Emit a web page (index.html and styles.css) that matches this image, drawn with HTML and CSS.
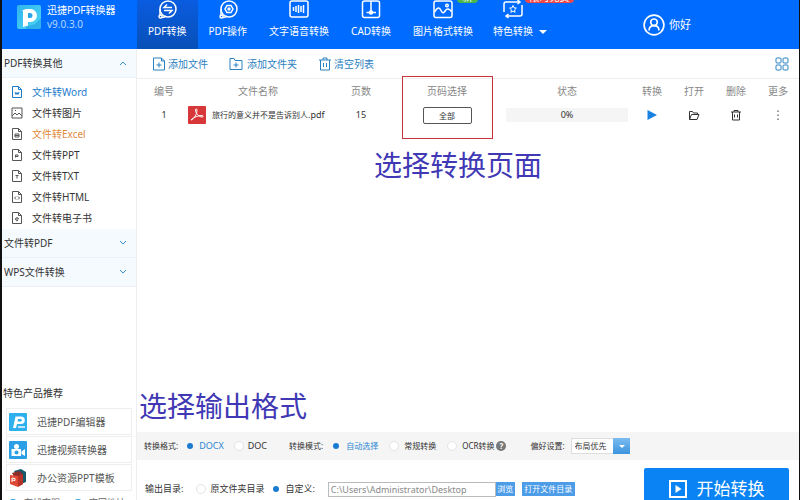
FILE: index.html
```
<!DOCTYPE html>
<html lang="zh-CN">

<head>
    <meta charset="UTF-8">
    <meta name="viewport" content="width=device-width, initial-scale=1.0">
    <title>迅捷PDF转换器</title>
    <link rel="stylesheet" href="styles.css">
</head>

<body>
    <div class="window">
        <header class="header">
            <div class="brand">
                <svg class="logo" viewBox="0 0 24 24">
                    <defs>
                        <linearGradient id="logoBg" x1="0" y1="0" x2="1" y2="1">
                            <stop offset="0" stop-color="#2fb4f0" />
                            <stop offset="1" stop-color="#4fd8f0" />
                        </linearGradient>
                    </defs>
                    <rect width="24" height="24" rx="2" fill="url(#logoBg)" />
                    <path d="M9 22 18 19 24 13V24H9z" fill="#1d9be6" opacity=".6" />
                    <path d="M5 5.500 9 4h4.500a5.500 5.500 0 0 1 0 13H11v3.500L6 22V6z" fill="#fff" />
                    <path d="M11 8h2a2.500 2.500 0 0 1 0 5h-2z" fill="#2aa6e8" />
                </svg>
                <div class="brand-text">
                    <div>迅捷PDF转换器</div>
                    <div class="version">v9.0.3.0</div>
                </div>
            </div>
            <nav class="tabs">
                <a href="#" class="tab active">
                    <svg viewBox="0 0 20 20"><circle cx="11" cy="9" r="8" /><path d="M3 9v7" /><circle cx="3.500" cy="16.500" r="1.500" /><path d="M5 17.500c2 0 3-.5 4-1.500" /><path d="M15 7.500H7l3-3M7 10.500h8l-3 3" /></svg>
                    <span>PDF转换</span>
                </a>
                <a href="#" class="tab">
                    <svg viewBox="0 0 20 20"><circle cx="11" cy="9" r="8" /><path d="M3 9v7" /><circle cx="3.500" cy="16.500" r="1.500" /><path d="M5 17.500c2 0 3-.5 4-1.500" /><path d="M9 5.500h4l2 3.500-2 3.500H9L7 9z" /><circle cx="11" cy="9" r="1" /></svg>
                    <span>PDF操作</span>
                </a>
                <a href="#" class="tab">
                    <svg viewBox="0 0 20 20"><rect x="1" y="1" width="18" height="16" rx="2" /><path d="M4.500 7v4M7 6v6M9.500 5v8M12 6v6M14.500 5v8" /></svg>
                    <span>文字语音转换</span>
                </a>
                <a href="#" class="tab">
                    <svg viewBox="0 0 20 20"><rect x="1.500" y="1" width="17" height="16.500" rx="2" /><path d="M10 1v11M5.500 12.500H15" /><circle cx="10" cy="12.500" r="1.500" fill="#fff" /></svg>
                    <span>CAD转换</span>
                </a>
                <a href="#" class="tab">
                    <svg viewBox="0 0 20 20"><rect x="1" y="1" width="18" height="16.500" rx="2" /><path d="M1.500 12c3-5 5-5 6.500-1.500s3 2.500 4.500 0 4-2 6 1" /><circle cx="14" cy="5.500" r="1.300" /></svg>
                    <span>图片格式转换</span>
                    <i class="badge badge-new">新</i>
                </a>
                <a href="#" class="tab tab-more">
                    <svg viewBox="0 0 20 20"><path d="M1 12V4a2 2 0 0 1 2-2h13M14.500 0l2.500 2-2.500 2M19 5v9a2 2 0 0 1-2 2H4M5.500 14 3 16l2.500 2" /><path d="m10 5.500 1 2.300 2.400.3-1.800 1.700.5 2.500-2.100-1.200-2.100 1.200.5-2.500-1.800-1.700 2.400-.3z" stroke-width="1" /></svg>
                    <span>特色转换</span>
                    <i class="badge badge-hot">限时免费</i>
                    <i class="caret"></i>
                </a>
            </nav>
            <a href="#" class="user">
                <svg viewBox="0 0 20 20"><circle cx="10" cy="10" r="9" /><circle cx="10" cy="7.500" r="3" /><path d="M5.500 15c0-2.500 1.500-4.500 4.500-4.500s4.500 2 4.500 4.500" /></svg>
                <span>你好</span>
            </a>
        </header>

        <div class="content">
            <aside class="sidebar">
                <button class="group">PDF转换其他<svg viewBox="0 0 8 8"><path d="M1 6l3-3 3 3" /></svg></button>
                <ul class="menu">
                    <li><a href="#" class="current"><svg viewBox="0 0 12 12"><path d="M1.500.5h6l3 3v8h-9zM7.500.5v3h3" /><path d="M4 6l1 2.500 1-2 1 2L8 6" /></svg>文件转Word</a></li>
                    <li><a href="#"><svg viewBox="0 0 12 12"><path d="M1 1h10v10H1zM1 9l3-3 2 2 2-2 3 3M4 3.500h1" /></svg>文件转图片</a></li>
                    <li><a href="#" class="hover"><svg viewBox="0 0 12 12"><path d="M1.500.5h6l3 3v8h-9zM7.500.5v3h3" /><path d="M4 6h4v3H4zM4 7.500h4" /></svg>文件转Excel</a></li>
                    <li><a href="#"><svg viewBox="0 0 12 12"><path d="M1.500.5h6l3 3v8h-9zM7.500.5v3h3" /><path d="M4.500 8.500V6H7v1.500H4.500" /></svg>文件转PPT</a></li>
                    <li><a href="#"><svg viewBox="0 0 12 12"><path d="M1.500.5h6l3 3v8h-9zM7.500.5v3h3" /><path d="M4.500 5.500h3M6 5.500v3" /></svg>文件转TXT</a></li>
                    <li><a href="#"><svg viewBox="0 0 12 12"><path d="M1.500.5h6l3 3v8h-9zM7.500.5v3h3" /><path d="M5 5.500 3.500 7 5 8.500M7 5.500 8.500 7 7 8.500" /></svg>文件转HTML</a></li>
                    <li><a href="#"><svg viewBox="0 0 12 12"><path d="M1.500.5h6l3 3v8h-9zM7.500.5v3h3" /><path d="M4.500 7h3a1.500 1.500 0 1 0-.5 1.300" /></svg>文件转电子书</a></li>
                </ul>
                <button class="group">文件转PDF<svg viewBox="0 0 8 8"><path d="M1 2l3 3 3-3" /></svg></button>
                <button class="group">WPS文件转换<svg viewBox="0 0 8 8"><path d="M1 2l3 3 3-3" /></svg></button>

                <div class="products">
                    <h2>特色产品推荐</h2>
                    <a href="#" class="product">
                        <svg viewBox="0 0 18 18"><rect width="18" height="18" rx="1" fill="#2fb0ee" /><path d="M4 15 6.500 3.500H12a3.500 3.500 0 0 1 0 7.500H8l-1 4z" fill="#fff" /><path d="M9 6h2.500a1.200 1.200 0 0 1 0 2.500h-3z" fill="#2fb0ee" /><path d="M9 14h7" stroke="#bfe8fc" stroke-width="2" /></svg>
                        迅捷PDF编辑器
                    </a>
                    <a href="#" class="product">
                        <svg viewBox="0 0 18 18"><rect width="18" height="18" rx="1" fill="#2b9fe6" /><circle cx="7.500" cy="5.500" r="2.500" fill="#fff" /><path d="M2.500 8h9.500v7H2.500zM12.500 10.500 16 8v7l-3.500-2z" fill="#fff" /><circle cx="7.500" cy="11.500" r="2" fill="#2b9fe6" /></svg>
                        迅捷视频转换器
                    </a>
                    <a href="#" class="product">
                        <svg viewBox="0 0 18 18"><path d="M5 2 12 0l5 3v10l-5 2z" fill="#17596b" /><path d="M3 4l7-2 4 3v10l-4 2z" fill="#8c2e2a" /><path d="M1 6l8 1v11l-8-3z" fill="#e04a35" /><path d="M9 7l5-2v10l-5 3z" fill="#b93228" /><path d="M3 9v4M3 9l3 .5v2l-3-.5" fill="none" stroke="#fff" /></svg>
                        办公资源PPT模板
                    </a>
                    <div class="links">
                        <a href="#"><i></i>在线客服</a>
                        <a href="#"><i></i>官网地址</a>
                    </div>
                </div>
            </aside>

            <main class="main">
                <div class="toolbar">
                    <button><svg viewBox="0 0 14 14"><path d="M1.500 1h8l3 3v9h-11zM9.500 1v3h3M7 5.500v5M4.500 8h5" /></svg>添加文件</button>
                    <button class="add-folder"><svg viewBox="0 0 14 14"><path d="M1 1.500h4l1 2h7v9H1zM7 5.500v5M4.500 8h5" /></svg>添加文件夹</button>
                    <button><svg viewBox="0 0 14 14"><path d="M1 3h12M5 3V1h4v2M2.500 3v10h9V3M5.500 6v4M8.500 6v4" /></svg>清空列表</button>
                    <button class="grid-view" aria-label="视图"><svg viewBox="0 0 14 14"><rect x="1" y="1" width="5" height="5" rx="1" /><rect x="8" y="1" width="5" height="5" rx="1" /><rect x="1" y="8" width="5" height="5" rx="1" /><rect x="8" y="8" width="5" height="5" rx="1" /></svg></button>
                </div>

                <div class="list">
                    <table>
                        <colgroup>
                            <col class="col-no">
                            <col class="col-name">
                            <col class="col-count">
                            <col class="col-pages">
                            <col>
                            <col class="col-action">
                            <col class="col-action">
                            <col class="col-action">
                            <col class="col-action">
                        </colgroup>
                        <thead>
                            <tr>
                                <th>编号</th>
                                <th>文件名称</th>
                                <th>页数</th>
                                <th>页码选择</th>
                                <th>状态</th>
                                <th>转换</th>
                                <th>打开</th>
                                <th>删除</th>
                                <th>更多</th>
                            </tr>
                        </thead>
                        <tbody>
                            <tr>
                                <td>1</td>
                                <td>
                                    <div class="file">
                                        <svg viewBox="0 0 18 18"><rect width="18" height="18" rx="1" fill="#d8373a" /><path d="M3 14c3-1 6-6 6-10 0-1.500-1.500-1.500-1.500 0 0 3 3.500 7 6.500 7 1.500 0 1.500-1.500 0-1.500-4 0-8 1.500-11 4.500z" fill="none" stroke="#fff" /></svg>
                                        <span>旅行的意义并不是告诉别人<span class="ext">.pdf</span></span>
                                    </div>
                                </td>
                                <td>15</td>
                                <td><button class="pages">全部</button></td>
                                <td><div class="progress">0%</div></td>
                                <td><button class="icon play" aria-label="转换"><svg viewBox="0 0 12 12"><path d="M1.500 1v10l9.500-5z" /></svg></button></td>
                                <td><button class="icon" aria-label="打开"><svg viewBox="0 0 12 12"><path d="M1.500 10.500v-8h3l1 1.500h4v1.500M1.500 10.500l2-5H11l-2 5z" /></svg></button></td>
                                <td><button class="icon" aria-label="删除"><svg viewBox="0 0 12 12"><path d="M1 3h10M4 3V1.500h4V3M2.500 3v8h7V3M4.500 5.500v3M7.500 5.500v3" /></svg></button></td>
                                <td><button class="icon" aria-label="更多"><svg viewBox="0 0 12 12"><path d="M6 1.500v1.500M6 5.500v1.500M6 9.500V11" /></svg></button></td>
                            </tr>
                        </tbody>
                    </table>
                    <div class="frame"></div>
                    <p class="note note-pages">选择转换页面</p>
                    <p class="note note-format">选择输出格式</p>
                </div>

                <div class="format">
                    <fieldset class="format-type">
                        <span>转换格式:</span>
                        <label class="latin"><input type="radio" name="format" checked>DOCX</label>
                        <label class="latin"><input type="radio" name="format">DOC</label>
                    </fieldset>
                    <fieldset class="format-mode">
                        <span>转换模式:</span>
                        <label><input type="radio" name="mode" checked>自动选择</label>
                        <label><input type="radio" name="mode">常规转换</label>
                        <label><input type="radio" name="mode">OCR转换<b class="help">?</b></label>
                    </fieldset>
                    <label for="prefer">偏好设置:</label>
                    <div class="select">
                        <select id="prefer">
                            <option>布局优先</option>
                        </select>
                    </div>
                </div>

                <div class="output">
                    <fieldset>
                        <span>输出目录:</span>
                        <label class="origin"><input type="radio" name="dir">原文件夹目录</label>
                        <label><input type="radio" name="dir" checked>自定义:</label>
                    </fieldset>
                    <input class="path" type="text" aria-label="输出目录" value="C:\Users\Administrator\Desktop">
                    <button class="small">浏览</button>
                    <button class="small open-dir">打开文件目录</button>
                    <button class="start"><svg viewBox="0 0 18 18"><rect x="1" y="1" width="16" height="16" /><path d="M6.500 5v8l6-4z" fill="#fff" stroke="none" /></svg>开始转换</button>
                </div>
            </main>
        </div>
    </div>
</body>

</html>
```
FILE: styles.css
```
* {
    box-sizing: border-box;
}

body {
    margin: 0;
    height: 100vh;
    overflow: hidden;
    font-family: "Noto Sans", "Noto Sans CJK SC", sans-serif;
    font-size: 10px;
    line-height: 14px;
    color: #333;
    background-color: #fff;
}

a {
    color: inherit;
    text-decoration: none;
}

button,
input,
select {
    margin: 0;
    padding: 0;
    border: none;
    background: none;
    font: inherit;
    color: inherit;
}

svg {
    flex: none;
    fill: none;
    stroke: currentColor;
}

.logo,
.product svg,
.file svg {
    stroke: none;
}

/* the window runs a little past the bottom of the screen */
.window {
    display: flex;
    flex-direction: column;
    height: calc(100vh + 10px);
    border-left: 2px solid #111;
    border-right: 1px solid #111;
}

/* header */
.header {
    display: flex;
    flex: none;
    height: 49px;
    color: #fff;
    background-color: #006cff;
}

.brand {
    display: flex;
    gap: 6px;
    width: 135px;
    padding: 3px 0 0 15px;
}

.logo {
    width: 24px;
    height: 24px;
    margin-top: 2px;
}

.version {
    color: #b5d5ff;
}

.tabs {
    display: flex;
}

.tab {
    position: relative;
    display: flex;
    flex-direction: column;
    align-items: center;
    gap: 4px;
    padding: 0 11px;
    white-space: nowrap;
}

.tab.active {
    background: linear-gradient(#0a5ce0, #0850b8);
}

.tab-more {
    padding-left: 9px;
    padding-right: 14px;
}

.tab svg {
    width: 20px;
    height: 20px;
    stroke-width: 1.5;
}

.badge {
    position: absolute;
    top: -12px;
    height: 15px;
    border-radius: 4px;
    font-style: normal;
    text-align: center;
    line-height: 18px;
}

.badge-new {
    right: 6px;
    width: 21px;
    background-color: #4cb848;
}

.badge-hot {
    left: 41px;
    width: 49px;
    background-color: #f04848;
}

.caret {
    position: absolute;
    right: 0;
    top: 30px;
    border: 4px solid transparent;
    border-top-color: #fff;
    border-bottom: none;
}

.user {
    display: flex;
    align-items: center;
    gap: 4px;
    margin-left: auto;
    margin-right: 108px;
    font-size: 11px;
}

.user svg {
    width: 22px;
    height: 22px;
    stroke-width: 1.5;
}

.content {
    display: flex;
    flex: 1;
    min-height: 0;
}

/* sidebar */
.sidebar {
    display: flex;
    flex-direction: column;
    flex: none;
    width: 135px;
    border-right: 1px solid #eee;
}

.group {
    display: flex;
    justify-content: space-between;
    align-items: center;
    height: 29px;
    padding: 0 9px 0 2px;
    border-bottom: 1px solid #eaf0f6;
    background-color: #f5faff;
}

.group svg {
    width: 8px;
    height: 8px;
    color: #3a8fc8;
}

.menu {
    display: grid;
    height: 151px;
    margin: 0;
    padding: 3px 0 0;
    list-style: none;
}

.menu a {
    display: flex;
    align-items: center;
    gap: 9px;
    height: 100%;
    padding-left: 9px;
}

.menu svg {
    width: 12px;
    height: 12px;
    color: #555;
}

.menu .current,
.menu .current svg {
    color: #1c7ccc;
}

.menu .hover {
    color: #e08a3c;
}

.products {
    display: flex;
    flex-direction: column;
    gap: 1px;
    margin-top: auto;
    padding: 0 4px;
}

.products h2 {
    margin: 0 0 7px -3px;
    font-size: 10px;
    font-weight: normal;
}

.product {
    display: flex;
    align-items: center;
    gap: 10px;
    height: 27px;
    padding-left: 2px;
    border: 1px solid #eee;
    color: #555;
}

.product svg {
    width: 18px;
    height: 18px;
}

.links {
    display: flex;
    gap: 14px;
    padding: 4px 0 0 3px;
    font-size: 9px;
    color: #666;
}

.links a {
    display: flex;
    align-items: center;
    gap: 7px;
}

.links i {
    width: 8px;
    height: 8px;
    border-radius: 50%;
    background-color: #2b9fe6;
}

/* main */
.main {
    display: flex;
    flex-direction: column;
    flex: 1;
    min-width: 0;
}

.toolbar {
    display: flex;
    align-items: center;
    gap: 21px;
    height: 30px;
    padding: 0 10px 0 15px;
    border-bottom: 1px solid #eee;
    color: #2a80c0;
}

.toolbar button {
    display: flex;
    align-items: center;
    gap: 2px;
}

.toolbar .add-folder {
    gap: 4px;
}

.toolbar svg {
    width: 14px;
    height: 14px;
}

.toolbar .grid-view {
    margin-left: auto;
}

.list {
    position: relative;
    flex: 1;
}

table {
    width: 100%;
    table-layout: fixed;
    border-collapse: collapse;
    text-align: center;
}

.col-no {
    width: 48px;
}

.col-name {
    width: 146px;
}

.col-count {
    width: 60px;
}

.col-pages {
    width: 112px;
}

.col-action {
    width: 42px;
}

th,
td {
    height: 24px;
    padding: 0;
    font-weight: normal;
}

th {
    color: #888;
}

th:first-child,
td:first-child {
    padding-left: 6px;
}

td {
    font-size: 9px;
}

.file {
    display: flex;
    align-items: center;
    gap: 6px;
    padding-left: 3px;
    font-size: 8px;
    white-space: nowrap;
}

.file svg {
    width: 18px;
    height: 18px;
}

.ext {
    font-size: 9px;
}

.pages {
    display: block;
    width: 49px;
    height: 17px;
    margin: 0 auto;
    border: 1px solid #555;
    border-radius: 2px;
    font-size: 8px;
    line-height: 15px;
}

.progress {
    margin: 0 3px;
    background-color: #f5f5f5;
}

.icon {
    display: block;
    width: 12px;
    height: 12px;
    margin: 0 auto;
}

.icon svg {
    display: block;
}

.play svg {
    fill: #1a82e2;
    stroke: none;
}

.frame {
    position: absolute;
    left: 265px;
    top: -3px;
    width: 91px;
    height: 63px;
    border: 1px solid #c8323c;
}

.note {
    position: absolute;
    margin: 0;
    font-size: 28px;
    line-height: 36px;
    color: #4038b4;
    white-space: nowrap;
}

.note-pages {
    left: 237px;
    top: 68px;
}

.note-format {
    left: 2px;
    bottom: 8px;
}

/* bottom bars */
fieldset {
    display: flex;
    align-items: center;
    min-width: 0;
    margin: 0;
    padding: 0;
    border: none;
}

fieldset label {
    display: flex;
    align-items: center;
    gap: 4px;
}

input[type="radio"] {
    appearance: none;
    width: 10px;
    height: 10px;
    border: 1px solid #e4e4e4;
    border-radius: 50%;
    background-color: #fff;
}

input[type="radio"]:checked {
    border: 2px solid transparent;
    background-color: #1a7cd0;
    background-clip: padding-box;
}

.format {
    display: flex;
    align-items: center;
    height: 28px;
    padding-left: 7px;
    font-size: 8px;
    white-space: nowrap;
    background-color: #f5f5f5;
}

.format-type {
    gap: 10px;
    margin-right: 22px;
}

.format-type .latin {
    font-size: 9px;
}

.format-mode {
    gap: 11px;
    margin-right: 24px;
}

.format-mode label {
    gap: 5px;
}

.format-type > span,
.format-mode > span {
    margin-right: -3px;
}

.format label:has(input:checked) {
    color: #2a86d4;
}

.help {
    width: 10px;
    height: 10px;
    margin-left: -3px;
    border-radius: 50%;
    font-size: 8px;
    line-height: 10px;
    text-align: center;
    color: #fff;
    background-color: #777;
}

.select {
    position: relative;
    margin-left: 6px;
}

.select select {
    appearance: none;
    display: block;
    width: 59px;
    height: 16px;
    padding-left: 3px;
    border: 1px solid #ddd;
    background-color: #fff;
}

.select::before {
    content: "";
    position: absolute;
    right: 0;
    top: 0;
    width: 17px;
    height: 16px;
    background: linear-gradient(#7cbcf0, #3c94dc);
    pointer-events: none;
}

.select::after {
    content: "";
    position: absolute;
    right: 5px;
    top: 7px;
    border: 3px solid transparent;
    border-top-color: #fff;
    border-bottom: none;
    pointer-events: none;
}

.output {
    display: flex;
    align-items: center;
    height: 50px;
    padding: 8px 10px 0 8px;
    font-size: 9px;
    white-space: nowrap;
}

.output fieldset {
    margin-right: 13px;
}

.output .origin {
    margin: 0 7px 0 13px;
}

.path {
    flex: 1;
    min-width: 0;
    max-width: 168px;
    height: 15px;
    padding-left: 2px;
    border: 1px solid #bbb;
    color: #888;
}

.small {
    width: 19px;
    height: 14px;
    font-size: 8px;
    line-height: 14px;
    color: #fff;
    background-color: #4c9ce8;
}

.open-dir {
    width: 53px;
    margin-left: 7px;
}

.start {
    display: flex;
    justify-content: center;
    align-items: center;
    gap: 10px;
    width: 145px;
    height: 42px;
    margin-left: auto;
    border-radius: 2px;
    font-size: 17px;
    color: #fff;
    background-color: #0a84f4;
}

.start svg {
    width: 18px;
    height: 18px;
    stroke-width: 2;
}
```
